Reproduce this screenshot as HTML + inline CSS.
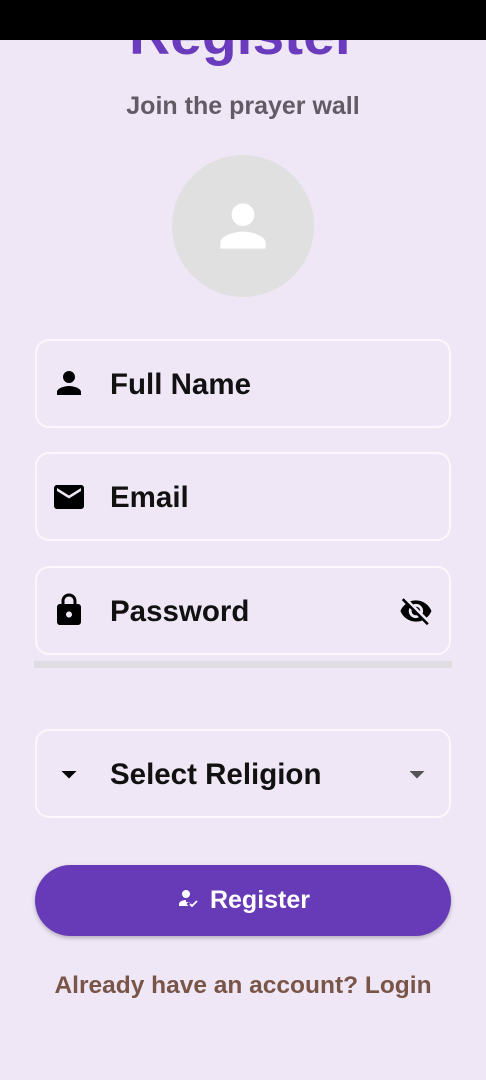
<!DOCTYPE html>
<html><head><style>
*{margin:0;padding:0;box-sizing:border-box}
body{width:486px;height:1080px;background:#efe7f6;font-family:"Liberation Sans",sans-serif;position:relative;overflow:hidden}
.bar{position:absolute;left:0;top:0;width:486px;height:40px;background:#000;z-index:5}
.title{position:absolute;left:0;width:486px;top:5px;text-align:center;font-size:57px;font-weight:bold;color:#6a3bbd;line-height:60px}
.sub{position:absolute;left:0;width:486px;top:92px;text-align:center;font-size:25px;font-weight:bold;color:#625b66}
.av{position:absolute;left:172px;top:155px;width:142px;height:142px;border-radius:50%;background:#e0e0e0}
.f{position:absolute;left:35px;width:416px;height:89px;border:2px solid #fbf7fd;border-radius:14px}
.f .t{position:absolute;left:73px;top:0;line-height:87px;font-size:29.5px;font-weight:bold;color:#111}
.f svg{position:absolute}
.prog{position:absolute;left:34px;top:661px;width:418px;height:7px;background:#e0dde2}
.btn{position:absolute;left:35px;top:865px;width:416px;height:71px;border-radius:36px;background:#673ab7;box-shadow:0 2px 4px rgba(0,0,0,.25);color:#fff;font-size:25px;font-weight:bold;text-align:center;line-height:71px}
.login{position:absolute;left:0;width:486px;top:972px;text-align:center;font-size:24.5px;font-weight:bold;color:#795548}
</style></head><body>
<div class="bar"></div>
<div class="title">Register</div>
<div class="sub">Join the prayer wall</div>
<div class="av"><svg style="position:absolute;left:37px;top:37px" width="68" height="68" viewBox="0 0 24 24"><path fill="#fff" d="M12 12c2.2 0 4-1.8 4-4s-1.8-4-4-4-4 1.8-4 4 1.8 4 4 4zm0 2c-2.7 0-8 1.3-8 4v2h16v-2c0-2.7-5.3-4-8-4z"/></svg></div>

<div class="f" style="top:339px"><svg style="left:14px;top:24px" width="36" height="36" viewBox="0 0 24 24"><path d="M12 12c2.2 0 4-1.8 4-4s-1.8-4-4-4-4 1.8-4 4 1.8 4 4 4zm0 2c-2.7 0-8 1.3-8 4v2h16v-2c0-2.7-5.3-4-8-4z"/></svg><div class="t">Full Name</div></div>
<div class="f" style="top:452px"><svg style="left:14px;top:25px" width="36" height="36" viewBox="0 0 24 24"><path d="M20 4H4c-1.1 0-2 .9-2 2v12c0 1.1.9 2 2 2h16c1.1 0 2-.9 2-2V6c0-1.1-.9-2-2-2zm0 4l-8 5-8-5V6l8 5 8-5v2z"/></svg><div class="t">Email</div></div>
<div class="f" style="top:566px"><svg style="left:14px;top:24px" width="36" height="36" viewBox="0 0 24 24"><path d="M18 8h-1V6c0-2.8-2.2-5-5-5S7 3.2 7 6v2H6c-1.1 0-2 .9-2 2v10c0 1.1.9 2 2 2h12c1.1 0 2-.9 2-2V10c0-1.1-.9-2-2-2zm-6 9c-1.1 0-2-.9-2-2s.9-2 2-2 2 .9 2 2-.9 2-2 2zM9 8V6c0-1.7 1.3-3 3-3s3 1.3 3 3v2H9z"/></svg><div class="t">Password</div>
<svg style="left:362px;top:26px" width="34" height="34" viewBox="0 0 24 24"><path d="M12 7c2.8 0 5 2.2 5 5 0 .6-.1 1.3-.4 1.8l2.9 2.9c1.5-1.3 2.7-2.9 3.4-4.7-1.7-4.4-6-7.5-11-7.5-1.4 0-2.7.3-4 .7l2.2 2.2c.6-.3 1.2-.4 1.9-.4zM2 4.3l2.3 2.3.5.5C3.1 8.4 1.8 10.1 1 12c1.7 4.4 6 7.5 11 7.5 1.5 0 3-.3 4.4-.8l.4.4 2.9 2.9 1.3-1.3L3.3 3 2 4.3zm5.5 5.5l1.5 1.5c0 .2-.1.4-.1.7 0 1.7 1.3 3 3 3 .2 0 .4 0 .7-.1l1.5 1.5c-.7.3-1.4.6-2.2.6-2.8 0-5-2.2-5-5 0-.8.2-1.5.6-2.2zm4.3-.8l3.2 3.2V12c0-1.7-1.3-3-3-3h-.2z"/></svg></div>
<div class="prog"></div>
<div class="f" style="top:729px"><svg style="left:14px;top:25px" width="36" height="36" viewBox="0 0 24 24"><path d="M7 10l5 5 5-5z"/></svg><div class="t">Select Religion</div><svg style="left:362px;top:25px" width="36" height="36" viewBox="0 0 24 24"><path fill="#555" d="M7 10l5 5 5-5z"/></svg></div>

<div class="btn"><svg style="vertical-align:-3px;margin-right:10px" width="24" height="24" viewBox="0 0 24 24"><circle cx="10" cy="7" r="4" fill="#fff"/><path fill="#fff" d="M10 13c-3 0-7 1.5-7 4v2h9.5l-2-2 2-2 1 1 .5-.5c-1.2-.3-2.6-.5-4-.5z"/><path d="M14 17l2 2 5-5" stroke="#fff" stroke-width="1.8" fill="none"/></svg>Register</div>
<div class="login">Already have an account? Login</div>
</body></html>
